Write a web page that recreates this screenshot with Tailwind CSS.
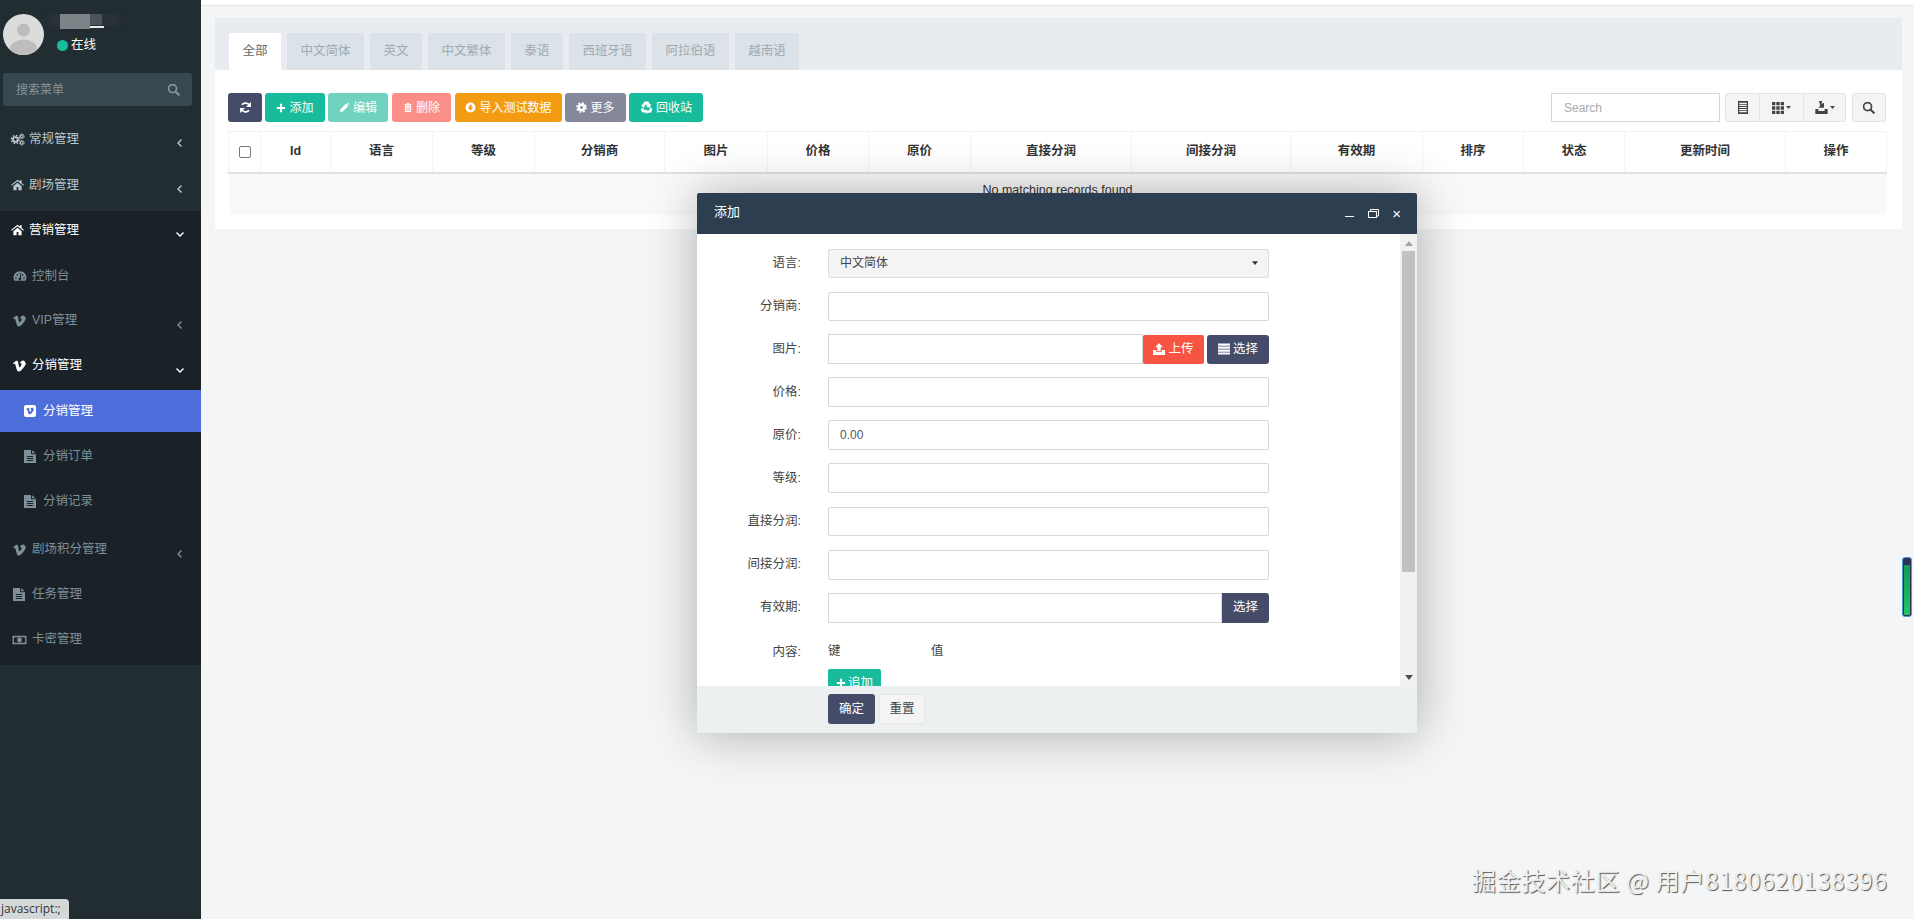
<!DOCTYPE html>
<html lang="zh-CN">
<head>
    <meta charset="UTF-8">
    <meta name="viewport" content="width=device-width, initial-scale=1.0">
    <title>分销管理</title>
    <script src="https://cdn.jsdelivr.net/npm/@tailwindcss/browser@4"></script>
</head>
<body class="relative h-[919px] overflow-hidden bg-[#f3f5f7] text-[12.5px] text-[#333] font-['Liberation_Sans','Noto_Sans_CJK_SC',sans-serif]">
    <!-- icon sprite -->
    <svg class="hidden">
        <symbol id="i-home" viewBox="1 3 22 20"><path d="M12 4 1 13l1.200 1.400L12 6.500l9.800 7.900L23 13l-4-3.300V5h-3v2.200zM5 15v7h5.500v-5.500h3V22H19v-7l-7-5.700z"/></symbol>
        <symbol id="i-cogs" viewBox="0 0 28 24"><circle cx="10" cy="12" r="4.500" fill="none" stroke="currentColor" stroke-width="3.500"/><circle cx="10" cy="12" r="7.500" fill="none" stroke="currentColor" stroke-width="2.500" stroke-dasharray="3 2.900"/><circle cx="22" cy="6" r="2.600" fill="none" stroke="currentColor" stroke-width="2"/><circle cx="22" cy="6" r="4.500" fill="none" stroke="currentColor" stroke-width="1.800" stroke-dasharray="2 1.500"/><circle cx="22" cy="18" r="2.600" fill="none" stroke="currentColor" stroke-width="2"/><circle cx="22" cy="18" r="4.500" fill="none" stroke="currentColor" stroke-width="1.800" stroke-dasharray="2 1.500"/></symbol>
        <symbol id="i-gauge" viewBox="0 2 26 20"><path fill-rule="evenodd" d="M13 3C6.400 3 1 8.400 1 15c0 2.300.6 4.300 1.700 6h20.600c1.100-1.700 1.700-3.700 1.700-6 0-6.600-5.400-12-12-12zM5.500 14.500a1.500 1.500 0 1 1 0 3 1.500 1.500 0 0 1 0-3zM8 8.500a1.500 1.500 0 1 1 0 3 1.500 1.500 0 0 1 0-3zM13 6a1.500 1.500 0 1 1 0 3 1.500 1.500 0 0 1 0-3zm5 2.500a1.500 1.500 0 1 1 0 3 1.500 1.500 0 0 1 0-3zm2.500 6a1.500 1.500 0 1 1 0 3 1.500 1.500 0 0 1 0-3zM15.800 9.500l-1.500 6.200a2.500 2.500 0 1 1-2 -.4l1.500-6.200z"/></symbol>
        <symbol id="i-vimeo" viewBox="1 3 22 19"><path d="M23 7c-.1 2.200-1.600 5.200-4.600 9-3.100 4-5.700 6-7.800 6-1.300 0-2.400-1.200-3.300-3.600L5.500 12C4.900 9.600 4.200 8.400 3.500 8.400c-.2 0-.7.3-1.600 1L1 8.200c1-.9 2-1.800 3-2.700 1.300-1.200 2.400-1.800 3-1.900 1.600-.2 2.500.9 2.900 3.200.4 2.500.7 4.100.8 4.700.5 2.100 1 3.100 1.600 3.100.4 0 1.100-.7 1.900-2 .9-1.400 1.300-2.400 1.400-3.100.1-1.200-.4-1.800-1.400-1.800-.5 0-1 .1-1.500.3 1-3.300 2.900-4.900 5.700-4.800 2.100.1 3.100 1.400 3 4z"/></symbol>
        <symbol id="i-file" viewBox="4 1 17 22" preserveAspectRatio="none"><path fill-rule="evenodd" d="M4 1h10v7h7v15H4zM15.500 1.500l5 5h-5zM8 11v1.800h9V11zm0 3.500v1.800h9v-1.800zM8 18v1.800h9V18z"/></symbol>
        <symbol id="i-money" viewBox="0 3 28 18"><path fill-rule="evenodd" d="M1 4h26v16H1zm4 3-1.500 1.500v7L5 17h18l1.500-1.500v-7L23 7zm9 .5a4.500 4.500 0 1 1 0 9 4.500 4.500 0 0 1 0-9z"/></symbol>
        <symbol id="i-refresh" viewBox="0 0 24 24"><path fill="none" stroke="currentColor" stroke-width="3.400" d="M20 10a8.300 8.300 0 0 0-14.500-3M4 14a8.300 8.300 0 0 0 14.500 3"/><path d="M22 2v9h-9zM2 22v-9h9z"/></symbol>
        <symbol id="i-plus" viewBox="0 0 24 24"><path d="M9.500 2h5v7.500H22v5h-7.500V22h-5v-7.500H2v-5h7.500z"/></symbol>
        <symbol id="i-pencil" viewBox="0 0 24 24"><path d="M2 22l1.500-6.500L15.500 3.500l5 5L8.500 20.500zM17 2l1.500-1 4.500 4.500-1 1.500z"/></symbol>
        <symbol id="i-trash" viewBox="0 0 24 24"><path fill-rule="evenodd" d="M9 1h6l1 3h5v2.500H3V4h5zM4.500 8h15v15h-15zM8 10.500V20.500h1.500v-10zm3.300 0V20.500h1.500v-10zm3.300 0V20.500h1.500v-10z"/></symbol>
        <symbol id="i-down" viewBox="0 0 24 24"><path fill-rule="evenodd" d="M12 1a11 11 0 1 1 0 22 11 11 0 0 1 0-22zM9.500 6v6H6l6 6.500 6-6.500h-3.500V6z"/></symbol>
        <symbol id="i-cog" viewBox="0 0 24 24"><circle cx="12" cy="12" r="6" fill="none" stroke="currentColor" stroke-width="5.500"/><circle cx="12" cy="12" r="10" fill="none" stroke="currentColor" stroke-width="3.500" stroke-dasharray="4 3.850"/></symbol>
        <symbol id="i-recycle" viewBox="1 1 22 22"><path d="M9 2h6l3 5 2-1-2.500 6.500L11 11l2-1-2-3.500-3.500 6L3 9.500zM2 15l3 5.500h6V16H6.500l1.500-2.500-2 -1zM13 14.500l-3 4.500 3 4.500V21h6l3-5.500-2.500-4.500-4 6.500H13z"/></symbol>
        <symbol id="i-upload" viewBox="1 1 22 22"><path fill-rule="evenodd" d="M12 1l7 8h-4v7H9V9H5zM1 14h6v3.500h10V14h6v9H1z"/></symbol>
        <symbol id="i-list" viewBox="1 3 22 20"><path d="M1 3h22v4H1zM1 8.500h22v4H1zM1 14h22v4H1zM1 19.500h22V23H1z"/></symbol>
        <symbol id="i-th" viewBox="2 2 20 20"><path d="M2 2h5.500v5.500H2zM9.200 2h5.600v5.500H9.200zM16.500 2H22v5.500h-5.500zM2 9.200h5.500v5.600H2zM9.200 9.200h5.600v5.600H9.200zM16.500 9.200H22v5.600h-5.500zM2 16.500h5.500V22H2zM9.200 16.500h5.600V22H9.200zM16.500 16.500H22V22h-5.500z"/></symbol>
        <symbol id="i-search" viewBox="2 2 21 21"><circle cx="10" cy="10" r="7" fill="none" stroke="currentColor" stroke-width="3"/><path fill="none" stroke="currentColor" stroke-width="3.600" d="M15 15l7 7"/></symbol>
        <symbol id="i-listalt" viewBox="4 1 16 22" preserveAspectRatio="none"><path fill-rule="evenodd" d="M4 1h16v22H4zm2 3v2h12V4zm0 3.500v2h12v-2zm0 3.500v2h12v-2zm0 3.500v2h12v-2zm0 3.500v2h12v-2z"/></symbol>
        <symbol id="i-export" viewBox="2 1 20 21"><path d="M8 1h5l-1 5 4-2v8H7l3-3.500zM2 14h5v3h10v-3h5v8H2z"/></symbol>
        <symbol id="i-left" viewBox="0 0 10 10"><path fill="none" stroke="currentColor" stroke-width="1.400" d="M6.500 1.500 3 5l3.500 3.500"/></symbol>
        <symbol id="i-chev-down" viewBox="0 0 10 10"><path fill="none" stroke="currentColor" stroke-width="1.400" d="M1.500 3.500 5 7l3.500-3.500"/></symbol>
        <symbol id="i-caret" viewBox="0 0 8 5"><path d="M0 0h8L4 5z"/></symbol>
    </svg>

    <div class="flex h-full">
        <!-- sidebar -->
        <aside class="w-[201px] shrink-0 bg-[#222d32] text-[#b8c7ce]">
            <div class="flex h-[73px] pl-[3px] pt-[14px]">
                <svg class="w-[41px] h-[41px] rounded-full" viewBox="0 0 41 41">
                    <rect width="41" height="41" fill="#dcdcdc"/>
                    <circle cx="20.500" cy="16" r="6.500" fill="#bdbdbd"/>
                    <ellipse cx="20.500" cy="35" rx="13.500" ry="9.500" fill="#bdbdbd"/>
                </svg>
                <div class="ml-[13px]">
                    <div class="relative h-[16px] w-[60px]">
                        <div class="absolute -left-[9px] top-0 w-[72px] h-[12px] rounded-full bg-[#283238] blur-[1px]"></div>
                        <div class="absolute left-[3px] top-0 w-[30px] h-[15px] bg-[#7d8488]"></div>
                        <div class="absolute left-[33px] top-0 w-[12px] h-[11px] bg-[#4a5358]"></div>
                        <div class="absolute left-[33px] top-[12px] w-[14px] h-[2px] bg-white/90"></div>
                    </div>
                    <div class="flex items-center gap-[3px] mt-[6px] text-white"><span class="w-[11px] h-[11px] rounded-full bg-[#18bc9c]"></span>在线</div>
                </div>
            </div>
            <div class="mx-[3px] w-[189px] h-[33px] rounded-[3px] bg-[#374850] flex items-center justify-between pl-[13px] pr-[12px] text-[12px] text-[#87949a]">
                搜索菜单
                <svg class="w-[12px] h-[12px] fill-current"><use href="#i-search"/></svg>
            </div>

            <nav class="mt-[10px]">
                <a class="flex items-center h-[46px] pl-[10px] pr-[16px]"><svg class="w-[15px] h-[13px] fill-current mr-[4px]"><use href="#i-cogs"/></svg><span class="flex-1">常规管理</span><svg class="w-[10px] h-[10px] mt-[8px] fill-current"><use href="#i-left"/></svg></a>
                <a class="flex items-center h-[46px] pl-[11px] pr-[16px]"><svg class="w-[13px] h-[12px] fill-current mr-[5px]"><use href="#i-home"/></svg><span class="flex-1">剧场管理</span><svg class="w-[10px] h-[10px] mt-[8px] fill-current"><use href="#i-left"/></svg></a>
                <div class="bg-[#1a2127] mt-[3px] pb-[3px] text-[#7e9099]">
                    <a class="flex items-center h-[38px] pl-[11px] pr-[16px] text-white"><svg class="w-[13px] h-[12px] fill-current mr-[5px]"><use href="#i-home"/></svg><span class="flex-1">营销管理</span><svg class="w-[10px] h-[10px] mt-[8px] fill-current"><use href="#i-chev-down"/></svg></a>
                    <a class="flex items-center h-[44px] mt-[5px] pl-[13px] pr-[16px]"><svg class="w-[14px] h-[12px] fill-current mr-[5px]"><use href="#i-gauge"/></svg><span class="flex-1">控制台</span></a>
                    <a class="flex items-center h-[45px] pl-[13px] pr-[16px]"><svg class="w-[13px] h-[12px] fill-current mr-[6px]"><use href="#i-vimeo"/></svg><span class="flex-1">VIP管理</span><svg class="w-[10px] h-[10px] mt-[8px] fill-current"><use href="#i-left"/></svg></a>
                    <a class="flex items-center h-[45px] pl-[13px] pr-[16px] text-white"><svg class="w-[13px] h-[12px] fill-current mr-[6px]"><use href="#i-vimeo"/></svg><span class="flex-1">分销管理</span><svg class="w-[10px] h-[10px] mt-[8px] fill-current"><use href="#i-chev-down"/></svg></a>
                    <a class="flex items-center h-[42px] mt-[2px] pl-[24px] bg-[#4e6fdb] text-white">
                        <svg class="w-[12px] h-[12px] mr-[7px]" viewBox="0 0 12 12"><rect width="12" height="12" rx="2" fill="#fff"/><svg x="2" y="2.500" width="8" height="7" class="fill-[#4e6fdb]"><use href="#i-vimeo"/></svg></svg>分销管理
                    </a>
                    <a class="flex items-center h-[44px] mt-[2px] pl-[24px]"><svg class="w-[12px] h-[13px] fill-current mr-[7px]"><use href="#i-file"/></svg>分销订单</a>
                    <a class="flex items-center h-[45px] mt-[1px] pl-[24px]"><svg class="w-[12px] h-[13px] fill-current mr-[7px]"><use href="#i-file"/></svg>分销记录</a>
                    <a class="flex items-center h-[45px] mt-[3px] pl-[13px] pr-[16px]"><svg class="w-[13px] h-[12px] fill-current mr-[6px]"><use href="#i-vimeo"/></svg><span class="flex-1">剧场积分管理</span><svg class="w-[10px] h-[10px] mt-[8px] fill-current"><use href="#i-left"/></svg></a>
                    <a class="flex items-center h-[45px] pl-[13px]"><svg class="w-[12px] h-[13px] fill-current mr-[7px]"><use href="#i-file"/></svg>任务管理</a>
                    <a class="flex items-center h-[45px] pl-[12px]"><svg class="w-[15px] h-[10px] fill-current mr-[5px]"><use href="#i-money"/></svg>卡密管理</a>
                </div>
            </nav>
        </aside>

        <!-- main -->
        <main class="flex-1 min-w-0">
            <div class="h-[6px] bg-white border-b border-[#e3e6e9]"></div>
            <section class="mt-[12px] ml-[14px] w-[1687px] h-[211px] bg-white">
                <div class="h-[52px] bg-[#e8ecf0] pt-[15px] pl-[14px] flex gap-[6px] text-[#a0aab2]">
                    <a class="w-[52px] flex items-center justify-center rounded-t-[2px] bg-white text-[#666]">全部</a>
                    <a class="w-[77px] flex items-center justify-center rounded-t-[2px] bg-[#dbe2e8]">中文简体</a>
                    <a class="w-[52px] flex items-center justify-center rounded-t-[2px] bg-[#dbe2e8]">英文</a>
                    <a class="w-[77px] flex items-center justify-center rounded-t-[2px] bg-[#dbe2e8]">中文繁体</a>
                    <a class="w-[52px] flex items-center justify-center rounded-t-[2px] bg-[#dbe2e8]">泰语</a>
                    <a class="w-[77px] flex items-center justify-center rounded-t-[2px] bg-[#dbe2e8]">西班牙语</a>
                    <a class="w-[77px] flex items-center justify-center rounded-t-[2px] bg-[#dbe2e8]">阿拉伯语</a>
                    <a class="w-[64px] flex items-center justify-center rounded-t-[2px] bg-[#dbe2e8]">越南语</a>
                </div>
                <div class="px-[13px] pt-[23px]">
                    <div class="flex w-[1658px] h-[29px] text-[12px] text-white">
                        <button class="w-[34px] rounded-[3px] bg-[#444c69] flex items-center justify-center"><svg class="w-[13px] h-[13px] fill-current"><use href="#i-refresh"/></svg></button>
                        <button class="w-[60px] ml-[3px] rounded-[3px] bg-[#18bc9c] flex items-center justify-center gap-[3px]"><svg class="w-[10px] h-[10px] fill-current"><use href="#i-plus"/></svg>添加</button>
                        <button class="w-[60px] ml-[3px] rounded-[3px] bg-[#6fd3bf] flex items-center justify-center gap-[3px]"><svg class="w-[11px] h-[11px] fill-current"><use href="#i-pencil"/></svg>编辑</button>
                        <button class="w-[59px] ml-[4px] rounded-[3px] bg-[#fb8e86] flex items-center justify-center gap-[3px]"><svg class="w-[10px] h-[11px] fill-current"><use href="#i-trash"/></svg>删除</button>
                        <button class="w-[107px] ml-[4px] rounded-[3px] bg-[#f39c12] flex items-center justify-center gap-[3px]"><svg class="w-[11px] h-[11px] fill-current"><use href="#i-down"/></svg>导入测试数据</button>
                        <button class="w-[61px] ml-[3px] rounded-[3px] bg-[#85889b] flex items-center justify-center gap-[3px]"><svg class="w-[11px] h-[11px] fill-current"><use href="#i-cog"/></svg>更多</button>
                        <button class="w-[74px] ml-[3px] rounded-[3px] bg-[#18bc9c] flex items-center justify-center gap-[3px]"><svg class="w-[13px] h-[13px] fill-current"><use href="#i-recycle"/></svg>回收站</button>
                        <div class="ml-auto flex text-[#444]">
                            <input class="w-[169px] h-[29px] px-[12px] text-[12px] border border-[#d8d8d8] outline-none placeholder:text-[#aaa]" placeholder="Search">
                            <div class="flex ml-[5px] rounded-[3px] border border-[#e3e3e3] bg-[#f4f4f4]">
                                <button class="w-[33px] flex items-center justify-center"><svg class="w-[10px] h-[13px] fill-current"><use href="#i-listalt"/></svg></button>
                                <button class="w-[44px] flex items-center justify-center gap-[2px] border-l border-[#e3e3e3]"><svg class="w-[12px] h-[12px] fill-current"><use href="#i-th"/></svg><svg class="w-[5px] h-[3px] fill-current"><use href="#i-caret"/></svg></button>
                                <button class="w-[42px] flex items-center justify-center gap-[2px] border-l border-[#e3e3e3]"><svg class="w-[13px] h-[13px] fill-current"><use href="#i-export"/></svg><svg class="w-[5px] h-[3px] fill-current"><use href="#i-caret"/></svg></button>
                            </div>
                            <button class="w-[34px] ml-[6px] rounded-[3px] border border-[#e3e3e3] bg-[#f4f4f4] flex items-center justify-center"><svg class="w-[12px] h-[12px] fill-current"><use href="#i-search"/></svg></button>
                        </div>
                    </div>
                    <table class="mt-[9px] w-[1658px] table-fixed border-collapse">
                        <thead>
                            <tr class="h-[41px] border-b-2 border-[#dfe1e3] font-bold [&>th]:border-x [&>th]:border-t [&>th]:border-[#f3f3f3]">
                                <th class="w-[32px]"><input type="checkbox" class="appearance-none block mx-auto w-[12px] h-[12px] rounded-[2px] border border-[#777] bg-white"></th>
                                <th class="w-[70px]">Id</th>
                                <th class="w-[102px]">语言</th>
                                <th class="w-[102px]">等级</th>
                                <th class="w-[130px]">分销商</th>
                                <th class="w-[103px]">图片</th>
                                <th class="w-[101px]">价格</th>
                                <th class="w-[102px]">原价</th>
                                <th class="w-[161px]">直接分润</th>
                                <th class="w-[159px]">间接分润</th>
                                <th class="w-[132px]">有效期</th>
                                <th class="w-[101px]">排序</th>
                                <th class="w-[101px]">状态</th>
                                <th class="w-[161px]">更新时间</th>
                                <th class="w-[101px]">操作</th>
                            </tr>
                        </thead>
                        <tbody>
                            <tr class="h-[42px] bg-[#f9f9f9]"><td colspan="15" class="text-center pb-[8px]">No matching records found</td></tr>
                        </tbody>
                    </table>
                </div>
            </section>
        </main>
    </div>

    <!-- add dialog -->
    <div class="absolute left-[697px] top-[193px] w-[720px] h-[540px] flex flex-col rounded-[2px] bg-white shadow-[1px_1px_50px_rgba(0,0,0,0.3)]">
        <div class="h-[41px] shrink-0 flex items-center pl-[17px] pr-[16px] rounded-t-[2px] bg-[#2c3e50] text-[13px] text-white">
            <span class="flex-1 pb-[3px]">添加</span>
            <span class="w-[9px] h-[1px] mt-[6px] bg-white"></span>
            <svg class="w-[11px] h-[9px] ml-[14px]" viewBox="0 0 11 9" fill="none" stroke="#fff"><rect x="0.500" y="2.500" width="8" height="6"/><path d="M2.500 2V.5h8V7H9"/></svg>
            <span class="ml-[13px] text-[15px] leading-none">×</span>
        </div>
        <div class="flex-1 min-h-0 flex">
            <div class="flex-1 overflow-hidden pt-[14px] flex flex-col gap-[13.100px] text-[#444]">
                <div class="flex items-center h-[30px] shrink-0">
                    <label class="w-[104px] text-right">语言:</label>
                    <div class="ml-[27px] w-[441px] h-[29px] border border-[#ddd] bg-[#f4f4f4] rounded-[2px] flex items-center justify-between pl-[11px] pr-[10px] text-[12px]">中文简体<svg class="w-[6px] h-[4px] fill-[#333]"><use href="#i-caret"/></svg></div>
                </div>
                <div class="flex items-center h-[30px] shrink-0">
                    <label class="w-[104px] text-right">分销商:</label>
                    <input class="ml-[27px] w-[441px] h-[29px] border border-[#d8d8d8] rounded-[2px] outline-none">
                </div>
                <div class="flex items-center h-[30px] shrink-0">
                    <label class="w-[104px] text-right">图片:</label>
                    <input class="ml-[27px] w-[315px] h-[30px] border border-[#d8d8d8] outline-none">
                    <button class="w-[61px] h-[29px] rounded-[2px] bg-[#f75444] text-white flex items-center justify-center gap-[3px]"><svg class="w-[12px] h-[12px] fill-current"><use href="#i-upload"/></svg>上传</button>
                    <button class="w-[62px] h-[29px] ml-[3px] rounded-[3px] bg-[#444c69] text-white flex items-center justify-center gap-[3px]"><svg class="w-[12px] h-[12px] fill-current"><use href="#i-list"/></svg>选择</button>
                </div>
                <div class="flex items-center h-[30px] shrink-0">
                    <label class="w-[104px] text-right">价格:</label>
                    <input class="ml-[27px] w-[441px] h-[30px] border border-[#d8d8d8] rounded-[2px] outline-none">
                </div>
                <div class="flex items-center h-[30px] shrink-0">
                    <label class="w-[104px] text-right">原价:</label>
                    <input class="ml-[27px] w-[441px] h-[30px] pl-[11px] text-[12px] text-[#555] border border-[#d8d8d8] rounded-[2px] outline-none" value="0.00">
                </div>
                <div class="flex items-center h-[30px] shrink-0">
                    <label class="w-[104px] text-right">等级:</label>
                    <input class="ml-[27px] w-[441px] h-[30px] border border-[#d8d8d8] rounded-[2px] outline-none">
                </div>
                <div class="flex items-center h-[30px] shrink-0">
                    <label class="w-[104px] text-right">直接分润:</label>
                    <input class="ml-[27px] w-[441px] h-[29px] border border-[#d8d8d8] rounded-[2px] outline-none">
                </div>
                <div class="flex items-center h-[30px] shrink-0">
                    <label class="w-[104px] text-right">间接分润:</label>
                    <input class="ml-[27px] w-[441px] h-[30px] border border-[#d8d8d8] rounded-[2px] outline-none">
                </div>
                <div class="flex items-center h-[30px] shrink-0">
                    <label class="w-[104px] text-right">有效期:</label>
                    <input class="ml-[27px] w-[394px] h-[30px] border border-[#d8d8d8] outline-none">
                    <button class="w-[47px] h-[30px] rounded-r-[3px] bg-[#444c69] text-white">选择</button>
                </div>
                <div class="flex shrink-0">
                    <label class="w-[104px] h-[32px] leading-[32px] text-right">内容:</label>
                    <div class="ml-[27px]">
                        <div class="flex h-[32px] items-center"><span class="w-[103px]">键</span><span>值</span></div>
                        <button class="mt-[1px] w-[53px] h-[29px] rounded-[2px] bg-[#18bc9c] text-white flex items-center justify-center gap-[2px]"><svg class="w-[10px] h-[10px] fill-current"><use href="#i-plus"/></svg>追加</button>
                    </div>
                </div>
            </div>
            <!-- scrollbar -->
            <div class="w-[17px] shrink-0 flex flex-col items-center bg-[#f1f1f1] pt-[7px]">
                <svg class="w-[8px] h-[5px] fill-[#a3a3a3] rotate-180"><use href="#i-caret"/></svg>
                <div class="w-[13px] h-[321px] mt-[5px] bg-[#c1c1c1]"></div>
                <svg class="w-[8px] h-[5px] mt-[103px] fill-[#505050]"><use href="#i-caret"/></svg>
            </div>
        </div>
        <div class="h-[47px] shrink-0 flex gap-[4px] pl-[131px] pt-[8px] rounded-b-[2px] bg-[#ecf0f1]">
            <button class="w-[47px] h-[30px] pt-[1px] rounded-[3px] bg-[#444c69] text-white">确定</button>
            <button class="w-[46px] h-[30px] pt-[1px] rounded-[2px] border border-[#e6e6e6] bg-[#f4f4f4] text-[#444]">重置</button>
        </div>
    </div>

    <!-- right edge widget -->
    <div class="absolute left-[1902px] top-[557px] w-[10px] h-[60px] rounded-[3px] border border-[#4a9fdd] bg-[#2d2f5a] p-px">
        <div class="mt-[6px] h-[50px] rounded-b-[1px] bg-gradient-to-b from-[#159a55] to-[#22c55e]"></div>
    </div>

    <!-- watermark -->
    <div class="absolute left-[1472px] top-[862px] whitespace-nowrap text-[24px] tracking-[0.7px] text-[#eef0f2] font-['Noto_Sans_CJK_SC',sans-serif] [text-shadow:1px_1px_1px_#555]">掘金技术社区 @ 用户8180620138396</div>

    <!-- link status -->
    <div class="absolute left-0 bottom-0 w-[69px] h-[20px] pl-[1px] leading-[20px] rounded-tr-[4px] bg-[#d5d8d9] text-[12px] text-[#333] font-['Open_Sans',sans-serif]">javascript:;</div>
</body>
</html>
